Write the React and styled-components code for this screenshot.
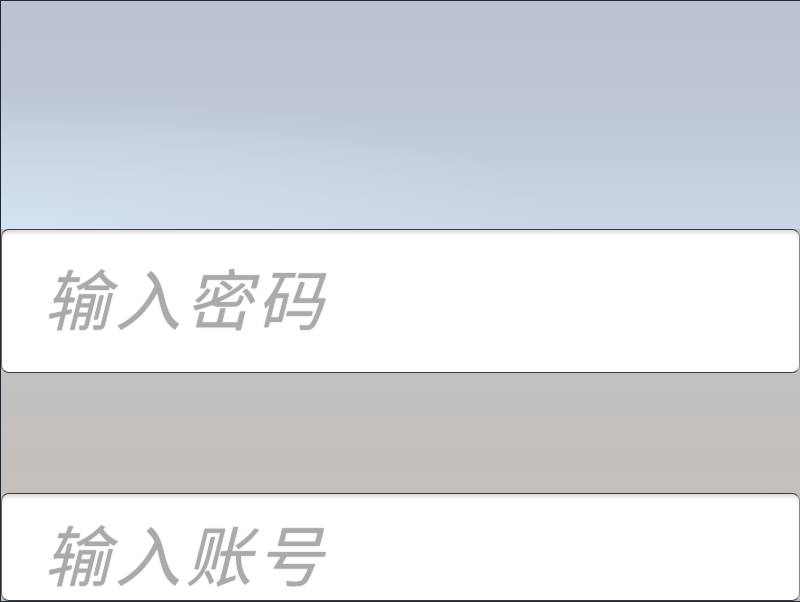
import React from "react";
import styled, { createGlobalStyle } from "styled-components";

const Global = createGlobalStyle`
  html, body { margin: 0; padding: 0; background: #1e2733; }
  * { box-sizing: border-box; }
`;

const Screen = styled.div`
  width: 800px;
  height: 602px;
  display: flex;
  flex-direction: column;
  border: 1px solid #1e2733;
  border-right-width: 0;
  overflow: hidden;
  background: #c2c2c2;
`;

const Header = styled.div`
  height: 228px;
  flex: none;
  background:
    radial-gradient(ellipse 70% 60% at 0% 100%, rgba(215, 230, 246, 0.75), rgba(215, 230, 246, 0) 100%),
    linear-gradient(to bottom, #bac2d1 0%, #bfc7d7 45%, #ccd5e5 100%);
`;

const Field = styled.input`
  display: block;
  width: 100%;
  height: ${(p) => p.$h}px;
  flex: ${(p) => (p.$grow ? "1 1 auto" : "none")};
  margin: 0;
  padding: ${(p) => p.$pt || 0}px 0 ${(p) => p.$pb || 0}px 42px;
  border: 1.5px solid #3b3b3b;
  border-left-color: #6a6a6a;
  border-right-color: #8a8a8a;
  border-radius: 8px;
  background: #ffffff;
  box-shadow: inset 0 5px 5px -3px rgba(0, 0, 0, 0.18);
  outline: none;
  font-family: "Noto Sans CJK SC", "Noto Sans", sans-serif;
  font-size: 66px;
  font-weight: 400;
  font-style: italic;
  letter-spacing: 5px;
  color: #333;
  &::placeholder {
    color: #aaaaaa;
    font-style: italic;
    text-shadow: 0 0 1.5px rgba(160, 160, 160, 0.8);
  }
`;

const Band = styled.div`
  height: 120px;
  flex: none;
  background: linear-gradient(to bottom, #c1c1c1 0%, #c3c0bd 45%, #c4c0bc 100%);
`;

export default function App() {
  return (
    <>
      <Global />
      <Screen>
        <Header />
        <Field $h={144} $pb={10} placeholder="输入密码" readOnly />
        <Band />
        <Field $h={140} $grow $pt={10} placeholder="输入账号" readOnly />
      </Screen>
    </>
  );
}
